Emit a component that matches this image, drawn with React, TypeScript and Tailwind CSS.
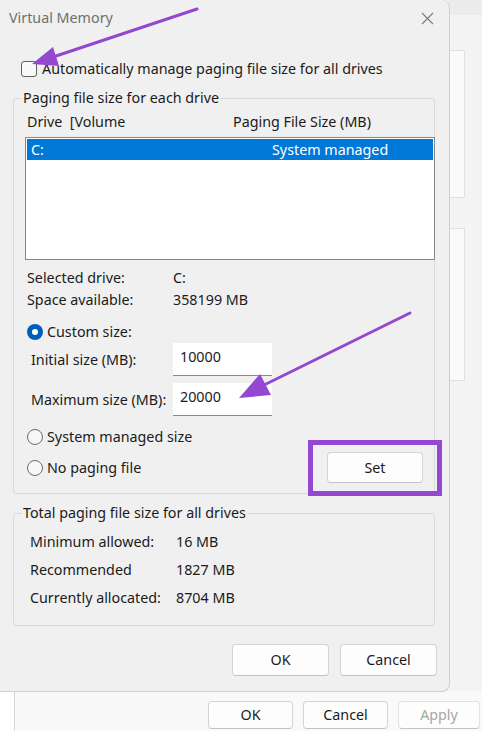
import React from 'react';

const Radio: React.FC<{ checked?: boolean; label: string }> = ({ checked, label }) => (
  <div className="flex items-center h-[22px] gap-[4px]">
    {checked ? (
      <span className="w-[16px] h-[16px] rounded-full bg-[#005fb8] flex items-center justify-center">
        <span className="w-[6px] h-[6px] rounded-full bg-white" />
      </span>
    ) : (
      <span className="w-[16px] h-[16px] rounded-full border border-[#6a6a6a] bg-[#f7f7f7]" />
    )}
    <span>{label}</span>
  </div>
);

const WinButton: React.FC<{ label: string; className?: string; disabled?: boolean }> = ({ label, className = '', disabled }) => (
  <button
    className={`flex items-center justify-center bg-[#fdfdfd] border border-[#d4d4d4] border-b-[#c2c2c2] rounded-[4px] ${
      disabled ? 'text-[#a6a6a6] bg-[#f6f6f6] border-[#e2e2e2]' : 'text-[#1b1b1b]'
    } ${className}`}
  >
    {label}
  </button>
);

const GroupBox: React.FC<{ title: string; className?: string; children: React.ReactNode }> = ({ title, className = '', children }) => (
  <div className={`relative border border-[#dadada] rounded-[3px] ${className}`}>
    <span className="absolute -top-[11px] left-[8px] px-[1px] bg-[#f0f0f0] leading-[20px]">{title}</span>
    {children}
  </div>
);

const InfoRow: React.FC<{ label: string; value: string; labelWidth: string; height: string }> = ({ label, value, labelWidth, height }) => (
  <div className={`flex items-center ${height}`}>
    <span className={labelWidth}>{label}</span>
    <span>{value}</span>
  </div>
);

export default function App() {
  return (
    <div className="relative w-[482px] h-[731px] overflow-hidden bg-white text-[14.3px] text-[#1b1b1b] font-['Noto_Sans','Liberation_Sans',sans-serif]">
      {/* window behind the dialog */}
      <div className="ml-[14px] h-full flex flex-col border-l border-[#d6d6d6] bg-[#f9f9f9]">
        <div className="h-[15px] bg-[#ececec]" />
        <div className="flex-1 flex flex-col items-end pr-[17px] bg-[#f4f4f4]">
          <div className="mt-[35px] w-[200px] h-[148px] border border-[#e0e0e0] bg-[#fafafa]" />
          <div className="mt-[30px] w-[200px] h-[153px] border border-[#e0e0e0] bg-[#fafafa]" />
        </div>
        <div className="h-[40px] bg-[#f9f9f9] flex items-start justify-end gap-[10px] pr-[2px] pt-[10px]">
          <WinButton label="OK" className="w-[85px] h-[28px]" />
          <WinButton label="Cancel" className="w-[85px] h-[28px]" />
          <WinButton label="Apply" className="w-[82px] h-[28px]" disabled />
        </div>
      </div>

      {/* Virtual Memory dialog */}
      <div className="absolute left-0 top-0 w-[450px] h-[692px] flex flex-col bg-[#f0f0f0] border-r border-b border-[#cfcfcf] rounded-tr-[8px] rounded-br-[8px]">
        <div className="h-[36px] flex items-center justify-between pl-[9px] pr-[15px]">
          <span className="text-[#6f6f6f]">Virtual Memory</span>
          <svg width="13" height="13" viewBox="0 0 13 13" className="text-[#7a7a7a]">
            <path d="M1 1L12 12M12 1L1 12" stroke="currentColor" strokeWidth="1.1" />
          </svg>
        </div>

        <div className="mt-[23px] pl-[21px] h-[20px] flex items-center gap-[5px]">
          <span className="w-[16px] h-[16px] rounded-[3px] border border-[#5e5e5e] bg-[#f8f8f8]" />
          <span>Automatically manage paging file size for all drives</span>
        </div>

        <GroupBox title="Paging file size for each drive" className="mt-[19px] ml-[13px] w-[422px] h-[396px] pt-[14px]">
          <div className="flex items-center h-[18px] pl-[13px]">
            <span className="w-[206px]">Drive&nbsp; [Volume</span>
            <span>Paging File Size (MB)</span>
          </div>
          <div className="mt-[6px] ml-[11px] w-[410px] h-[123px] bg-white border border-[#828790] p-px">
            <div className="h-[21px] bg-[#0078d7] text-white flex items-center pl-[4px]">
              <span className="w-[241px]">C:</span>
              <span>System managed</span>
            </div>
          </div>
          <div className="mt-[7px] pl-[13px]">
            <InfoRow label="Selected drive:" value="C:" labelWidth="w-[146px]" height="h-[22px]" />
            <InfoRow label="Space available:" value="358199 MB" labelWidth="w-[146px]" height="h-[22px]" />
          </div>
          <div className="mt-[10px] pl-[13px]">
            <Radio checked label="Custom size:" />
          </div>
          <div className="pl-[17px] flex items-center">
            <span className="w-[142px]">Initial size (MB):</span>
            <div className="w-[99px] h-[33px] bg-white border-b border-[#8a8a8a] pl-[7px] pt-[3px]">10000</div>
          </div>
          <div className="mt-[7px] pl-[17px] flex items-center">
            <span className="w-[142px]">Maximum size (MB):</span>
            <div className="w-[99px] h-[33px] bg-white border-b border-[#8a8a8a] pl-[7px] pt-[3px]">20000</div>
          </div>
          <div className="mt-[10px] pl-[13px]">
            <Radio label="System managed size" />
          </div>
          <div className="mt-[4px] pl-[13px] pr-[11px] flex items-center justify-between">
            <Radio label="No paging file" />
            <WinButton label="Set" className="w-[96px] h-[31px]" />
          </div>
        </GroupBox>

        <GroupBox title="Total paging file size for all drives" className="mt-[19px] ml-[13px] w-[422px] h-[113px] pt-[14px] pl-[16px]">
          <InfoRow label="Minimum allowed:" value="16 MB" labelWidth="w-[146px]" height="h-[28px]" />
          <InfoRow label="Recommended" value="1827 MB" labelWidth="w-[146px]" height="h-[28px]" />
          <InfoRow label="Currently allocated:" value="8704 MB" labelWidth="w-[146px]" height="h-[28px]" />
        </GroupBox>

        <div className="mt-[18px] pr-[12px] flex justify-end gap-[11px]">
          <WinButton label="OK" className="w-[97px] h-[32px]" />
          <WinButton label="Cancel" className="w-[97px] h-[32px]" />
        </div>
      </div>

      {/* annotation: highlight around Set */}
      <div className="absolute left-[308px] top-[440px] w-[134px] h-[56px] border-[5px] border-[#9448d2]" />

      {/* annotation arrows */}
      <svg className="absolute inset-0 pointer-events-none" width="482" height="731" viewBox="0 0 482 731">
        <line x1="197" y1="9" x2="50" y2="58" stroke="#9448d2" strokeWidth="3" strokeLinecap="round" />
        <polygon points="32,64 53,47 59,66" fill="#9448d2" />
        <line x1="410" y1="313" x2="258" y2="388" stroke="#9448d2" strokeWidth="3" strokeLinecap="round" />
        <polygon points="239,398 260,374 271,395" fill="#9448d2" />
      </svg>
    </div>
  );
}
